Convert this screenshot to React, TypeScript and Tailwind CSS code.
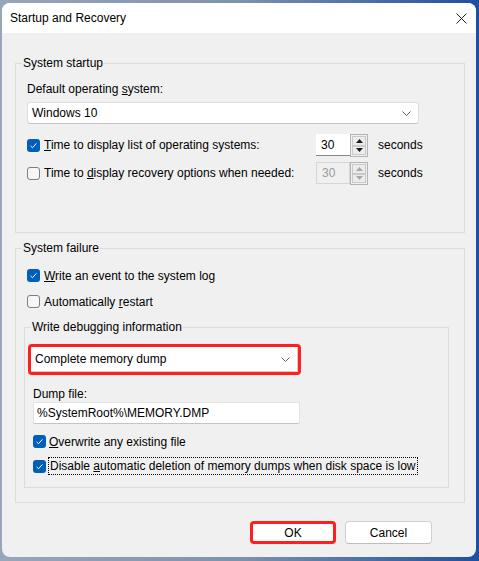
import React from 'react';

const font = { fontFamily: '"Liberation Sans", Arial, sans-serif' };

function Box({ checked }: { checked: boolean }) {
  if (checked) {
    return (
      <span className="flex h-[13px] w-[13px] shrink-0 items-center justify-center rounded-[3px] bg-[#005fb8]">
        <svg width="9" height="9" viewBox="0 0 9 9">
          <path d="M1.6 4.9 L3.5 6.7 L7.4 2.4" stroke="white" strokeWidth="1" fill="none" />
        </svg>
      </span>
    );
  }
  return <span className="h-[13px] w-[13px] shrink-0 rounded-[3px] border border-[#7f7f7f] bg-[#f6f6f6]" />;
}

function Chevron() {
  return (
    <svg width="9" height="5" viewBox="0 0 9 5">
      <path d="M0.5 0.5 L4.5 4.5 L8.5 0.5" stroke="#5f5f5f" strokeWidth="1" fill="none" />
    </svg>
  );
}

function Spinner({ disabled }: { disabled?: boolean }) {
  const tri = disabled ? '#a8a8a8' : '#1a1a1a';
  return (
    <div className="flex h-[22px]">
      <div
        className={
          disabled
            ? 'flex h-[22px] w-[34px] items-center border border-[#d6d6d6] bg-[#f0f0f0] pl-[5px] text-[#9a9a9a]'
            : 'flex h-[22px] w-[34px] items-center border-b border-[#868686] bg-white pl-[5px]'
        }
      >
        30
      </div>
      <div className="flex h-[23px] w-[18px] flex-col border border-[#b4b4b4] bg-[#f0f0f0] p-[1px]">
        <div className="flex flex-1 items-center justify-center border border-[#c9c9c9] bg-[#ececec]">
          <svg width="7" height="4" viewBox="0 0 7 4">
            <path d="M0 4 L3.5 0 L7 4 Z" fill={tri} />
          </svg>
        </div>
        <div className="flex flex-1 items-center justify-center border border-[#c9c9c9] bg-[#ececec]">
          <svg width="7" height="4" viewBox="0 0 7 4">
            <path d="M0 0 L7 0 L3.5 4 Z" fill={tri} />
          </svg>
        </div>
      </div>
    </div>
  );
}

export default function App() {
  return (
    <div
      className="h-[561px] w-[479px] bg-gradient-to-r from-[#97a7b9] via-[#7e92ab] to-[#1f4f9e] pb-[4px] pl-[2px] pr-[3px] pt-[3px] text-[12px] text-black"
      style={font}
    >
      <div className="flex h-[554px] w-[474px] flex-col overflow-hidden rounded-[8px] bg-[#f0f0f0]">
        {/* title bar */}
        <div className="flex h-[30px] shrink-0 items-center justify-between bg-white pl-[8px] pr-[8px]">
          <span className="text-[12px]">Startup and Recovery</span>
          <svg width="11" height="11" viewBox="0 0 11 11" className="mr-[1px]">
            <path d="M0.5 0.5 L10.5 10.5 M10.5 0.5 L0.5 10.5" stroke="#1a1a1a" strokeWidth="1" />
          </svg>
        </div>

        <div className="flex flex-1 flex-col pl-[13px] pr-[11px]">
          {/* System startup */}
          <fieldset className="mt-[23px] h-[177px] border border-[#dcdcdc] pl-[11px] pt-[11px]">
            <legend className="-ml-[5px] px-[1px] leading-[15px]">System startup</legend>
            <div className="leading-[15px]">
              Default operating <u>s</u>ystem:
            </div>
            <div className="mt-[5px] flex h-[22px] w-[392px] items-center justify-between rounded-[3px] border border-[#dedede] border-b-[#c4c4c4] bg-white pl-[4px] pr-[7px]">
              <span>Windows 10</span>
              <Chevron />
            </div>
            <div className="mt-[10px] flex h-[22px] items-center">
              <div className="flex w-[289px] items-center gap-[4px]">
                <Box checked />
                <span>
                  <u>T</u>ime to display list of operating systems:
                </span>
              </div>
              <Spinner />
              <span className="ml-[10px]">seconds</span>
            </div>
            <div className="mt-[6px] flex h-[22px] items-center">
              <div className="flex w-[289px] items-center gap-[4px]">
                <Box checked={false} />
                <span>
                  Time to <u>d</u>isplay recovery options when needed:
                </span>
              </div>
              <Spinner disabled />
              <span className="ml-[10px]">seconds</span>
            </div>
          </fieldset>

          {/* System failure */}
          <fieldset className="mt-[8px] h-[262px] border border-[#dcdcdc] pl-[11px] pr-[15px] pt-[11px]">
            <legend className="-ml-[5px] px-[1px] leading-[15px]">System failure</legend>
            <div className="flex h-[17px] items-center gap-[4px]">
              <Box checked />
              <span>
                <u>W</u>rite an event to the system log
              </span>
            </div>
            <div className="mt-[9px] flex h-[17px] items-center gap-[4px]">
              <Box checked={false} />
              <span>
                Automatically <u>r</u>estart
              </span>
            </div>

            <fieldset className="-ml-[3px] mt-[10px] h-[168px] border border-[#dcdcdc] pl-[3px]">
              <legend className="ml-[3px] px-[1px] leading-[15px]">Write debugging information</legend>
              <div className="mt-[9px] h-[31px] w-[273px] rounded-[4px] border-[3px] border-[#ff1f1f] bg-white">
                <div className="flex h-full items-center justify-between border-b border-r border-[#cfcfcf] pl-[4px] pr-[7px]">
                  <span>Complete memory dump</span>
                  <Chevron />
                </div>
              </div>
              <div className="ml-[5px] mt-[12px] leading-[15px]">Dump file:</div>
              <div className="ml-[5px] flex h-[22px] w-[267px] items-center rounded-[2px] border border-[#e2e2e2] border-b-[#c4c4c4] bg-white pl-[3px]">
                %SystemRoot%\MEMORY.DMP
              </div>
              <div className="ml-[5px] mt-[9px] flex h-[17px] items-center gap-[3px]">
                <Box checked />
                <span>
                  <u>O</u>verwrite any existing file
                </span>
              </div>
              <div className="ml-[5px] mt-[7px] flex h-[18px] items-center gap-[2px]">
                <Box checked />
                <span className="h-[18px] border border-dotted border-black px-[1px] leading-[16px]">
                  Disable <u>a</u>utomatic deletion of memory dumps when disk space is low
                </span>
              </div>
            </fieldset>
          </fieldset>

          {/* buttons */}
          <div className="mt-[18px] flex justify-end gap-[9px] pr-[33px]">
            <button className="flex h-[23px] w-[86px] items-center justify-center rounded-[4px] border-[3px] border-[#ff1f1f] bg-white">
              OK
            </button>
            <button className="flex h-[23px] w-[87px] items-center justify-center rounded-[4px] border border-[#d0d0d0] border-b-[#bdbdbd] bg-white">
              Cancel
            </button>
          </div>
        </div>
      </div>
    </div>
  );
}
